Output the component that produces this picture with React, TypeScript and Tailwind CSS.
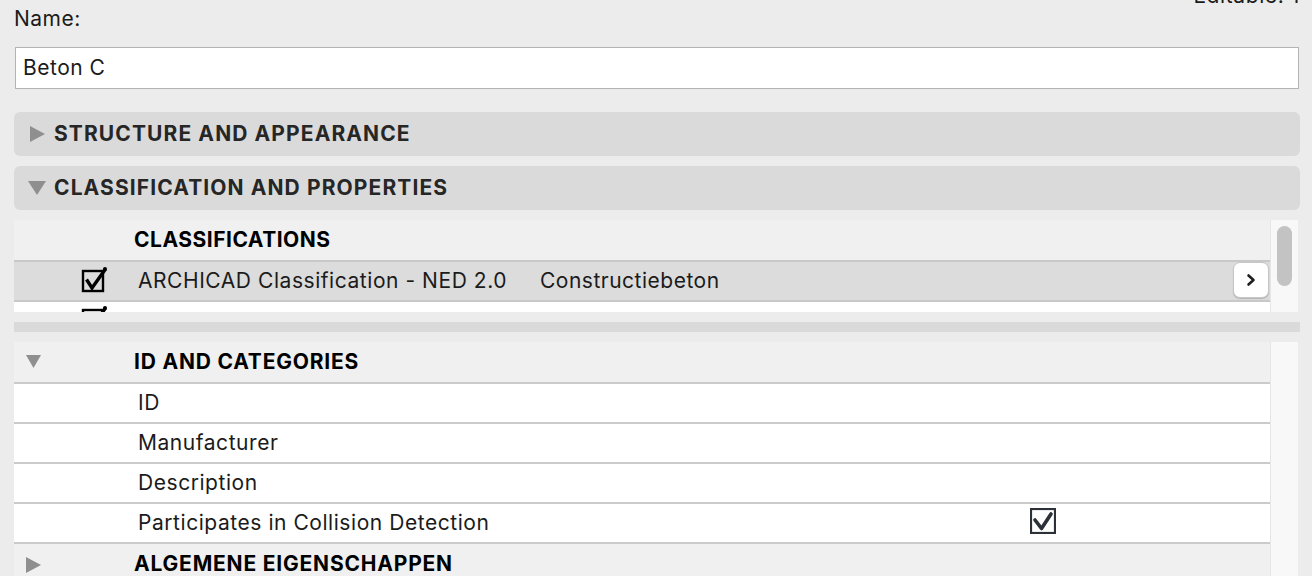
import React from "react";

function TriRight({ className = "" }: { className?: string }) {
  return (
    <svg width="15" height="16" viewBox="0 0 15 16" className={className}>
      <polygon points="0,0 15,8 0,16" fill="#8f8f8f" />
    </svg>
  );
}

function TriDown({ w = 18, h = 14, className = "" }: { w?: number; h?: number; className?: string }) {
  return (
    <svg width={w} height={h} viewBox={`0 0 ${w} ${h}`} className={className}>
      <polygon points={`0,0 ${w},0 ${w / 2},${h}`} fill="#8f8f8f" />
    </svg>
  );
}

function BlackCheck() {
  return (
    <svg width="28" height="28" viewBox="0 0 28 28">
      <rect x="3" y="5" width="20" height="20" fill="none" stroke="#000" strokeWidth="2.4" />
      <path d="M6.5 13.5 L12 22 L25.5 3" fill="none" stroke="#000" strokeWidth="3.4" strokeLinejoin="miter" strokeLinecap="butt" />
      <circle cx="25" cy="3" r="2" fill="#000" />
    </svg>
  );
}

function DarkCheck() {
  return (
    <svg width="26" height="26" viewBox="0 0 26 26">
      <rect x="1" y="1" width="24" height="24" fill="#fff" stroke="#2b3137" strokeWidth="2.2" />
      <path d="M5 12 L11.5 20.5 L21 6" fill="none" stroke="#2b3137" strokeWidth="3.6" strokeLinejoin="round" strokeLinecap="round" />
    </svg>
  );
}

function SectionHeader({ open, label, mt }: { open: boolean; label: string; mt: string }) {
  return (
    <div className={`${mt} h-[44px] rounded-[6px] bg-[#dadada] flex items-center`}>
      <div className="w-[40px] flex justify-center pl-[6px]">
        {open ? <TriDown /> : <TriRight />}
      </div>
      <span className="text-[21px] font-bold tracking-[1.1px] text-[#262626] leading-[24px]">{label}</span>
    </div>
  );
}

function PropRow({ label, check }: { label: string; check?: boolean }) {
  return (
    <div className="h-[40px] border-t-2 border-[#cbcbcb] bg-white flex items-center relative">
      <span className="pl-[124px] text-[21px] tracking-[0.55px] leading-[24px] text-[#1b1b1b]">{label}</span>
      {check && (
        <div className="absolute left-[1016px] top-[4px]">
          <DarkCheck />
        </div>
      )}
    </div>
  );
}

export default function App() {
  return (
    <div className="w-[1312px] h-[576px] overflow-hidden bg-[#ececec] text-[#1b1b1b] font-['Inter','Liberation_Sans',sans-serif] pl-[14px] pr-[12px]">
      <div className="h-[40px] flex justify-between items-start">
        <div className="pt-[7px] text-[21px] tracking-[0.5px] leading-[24px]">Name:</div>
        <div className="-mt-[16px] text-[21px] tracking-[0.6px] leading-[24px]">Editable: 1</div>
      </div>
      <div className="mt-[7px] mx-[1px] h-[42px] border border-[#b3b3b3] bg-white flex items-center pl-[7px] text-[21px] tracking-[0.5px] leading-[24px]">
        Beton C
      </div>
      <SectionHeader open={false} label="STRUCTURE AND APPEARANCE" mt="mt-[23px]" />
      <SectionHeader open={true} label="CLASSIFICATION AND PROPERTIES" mt="mt-[10px]" />

      <div className="mt-[10px] mr-[2px] h-[92px] flex">
        <div className="flex-1 flex flex-col">
          <div className="h-[40px] bg-[#f0f0f0] flex items-center pl-[120px]">
            <span className="text-[21px] font-bold leading-[24px] text-black tracking-[0.5px]">CLASSIFICATIONS</span>
          </div>
          <div className="h-[42px] border-y-2 border-[#c8c8c8] bg-[#dcdcdc] flex items-center relative">
            <div className="absolute left-[66px] top-[4px]">
              <BlackCheck />
            </div>
            <span className="pl-[124px] w-[526px] text-[21px] tracking-[0.55px] leading-[24px] text-[#1b1b1b]">ARCHICAD Classification - NED 2.0</span>
            <span className="text-[21px] tracking-[0.5px] leading-[24px] text-[#1b1b1b]">Constructiebeton</span>
            <div className="absolute left-[1219px] top-0 w-[36px] h-[36px] rounded-[7px] bg-white border border-[#c6c6c6] shadow-[0_1px_1px_rgba(0,0,0,0.18)] flex items-center justify-center">
              <svg width="12" height="14" viewBox="0 0 12 14">
                <path d="M3.5 2.5 L8.5 7 L3.5 11.5" fill="none" stroke="#1f1f1f" strokeWidth="2.6" strokeLinecap="round" strokeLinejoin="round" />
              </svg>
            </div>
          </div>
          <div className="h-[10px] bg-white overflow-hidden relative">
            <div className="absolute left-[66px] top-[3px]">
              <BlackCheck />
            </div>
          </div>
        </div>
        <div className="w-[28px] bg-[#f8f8f8] border-l border-[#e6e6e6] pt-[6px] pl-[6px]">
          <div className="w-[15px] h-[60px] rounded-full bg-[#c3c3c3]" />
        </div>
      </div>

      <div className="mt-[10px] h-[10px] bg-[#dadada]" />

      <div className="mt-[10px] mr-[2px] flex">
        <div className="flex-1 flex flex-col">
          <div className="h-[40px] bg-[#f0f0f0] flex items-center relative">
            <TriDown w={15} h={13} className="absolute left-[12px] top-[13px]" />
            <span className="pl-[120px] text-[21px] font-bold leading-[24px] text-black tracking-[0.8px]">ID AND CATEGORIES</span>
          </div>
          <PropRow label="ID" />
          <PropRow label="Manufacturer" />
          <PropRow label="Description" />
          <PropRow label="Participates in Collision Detection" check />
          <div className="h-[42px] border-t-2 border-[#cbcbcb] bg-[#f0f0f0] flex items-center relative">
            <div className="absolute left-[12px] top-[13px]">
              <TriRight />
            </div>
            <span className="pl-[120px] text-[21px] font-bold leading-[24px] text-black tracking-[0.8px]">ALGEMENE EIGENSCHAPPEN</span>
          </div>
        </div>
        <div className="w-[28px] bg-[#f8f8f8] border-l border-[#e6e6e6]" />
      </div>
    </div>
  );
}
